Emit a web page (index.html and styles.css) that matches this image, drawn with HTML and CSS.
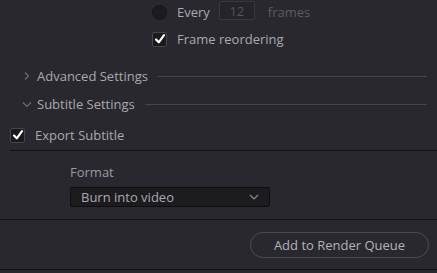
FILE: index.html
```html
<!DOCTYPE html>
<html>
<head>
<meta charset="utf-8">
<link rel="stylesheet" href="styles.css">
</head>
<body>
<div class="panel">
  <div class="opts">
    <div class="row row-every">
      <span class="radio"></span>
      <span class="label">Every</span>
      <span class="numbox">12</span>
      <span class="label dim">frames</span>
    </div>
    <div class="row row-reorder">
      <span class="check"><svg width="12" height="12" viewBox="0 0 12 12"><path d="M2 6.5 L4.8 9.3 L10 2.2" fill="none" stroke="#fff" stroke-width="2.2" stroke-linecap="round" stroke-linejoin="round"/></svg></span>
      <span class="label">Frame reordering</span>
    </div>
  </div>

  <div class="heading heading-adv">
    <svg class="chev" width="10" height="10" viewBox="0 0 10 10"><path d="M3 1.5 L6.5 5 L3 8.5" fill="none" stroke="#6c6c74" stroke-width="1.2"/></svg>
    <span class="label">Advanced Settings</span>
    <span class="rule"></span>
  </div>
  <div class="heading heading-sub">
    <svg class="chev" width="10" height="10" viewBox="0 0 10 10"><path d="M1 3.5 L5 7.5 L9 3.5" fill="none" stroke="#6c6c74" stroke-width="1.2"/></svg>
    <span class="label">Subtitle Settings</span>
    <span class="rule"></span>
  </div>

  <div class="row row-export">
    <span class="check"><svg width="12" height="12" viewBox="0 0 12 12"><path d="M2 6.5 L4.8 9.3 L10 2.2" fill="none" stroke="#fff" stroke-width="2.2" stroke-linecap="round" stroke-linejoin="round"/></svg></span>
    <span class="label">Export Subtitle</span>
  </div>
  <div class="sep sep-indent"></div>

  <div class="format">
    <div class="label">Format</div>
    <div class="select">
      <span>Burn into video</span>
      <svg width="10" height="6" viewBox="0 0 10 6"><path d="M1 1 L5 5 L9 1" fill="none" stroke="#8a8a92" stroke-width="1.2"/></svg>
    </div>
  </div>
  <div class="sep"></div>

  <div class="footer">
    <button class="btn">Add to Render Queue</button>
  </div>
  <div class="sep"></div>
</div>
</body>
</html>
```

FILE: styles.css
```css
html, body {
  margin: 0;
  padding: 0;
  background: #28282e;
}
body {
  font-family: "Open Sans", "Noto Sans", sans-serif;
  font-size: 13px;
  color: #a9a9b0;
  width: 437px;
  height: 273px;
  overflow: hidden;
}
.panel {
  display: flex;
  flex-direction: column;
}
.opts {
  display: flex;
  flex-direction: column;
  padding-left: 152px;
}
.row {
  display: flex;
  align-items: center;
  height: 24px;
}
.row-reorder {
  margin-top: 3px;
}
.radio {
  width: 15px;
  height: 15px;
  box-sizing: border-box;
  border-radius: 50%;
  background: #1c1c20;
  border: 1px solid #16161a;
  margin-right: 10px;
}
.check {
  width: 15px;
  height: 15px;
  box-sizing: border-box;
  background: #1a1a1d;
  border: 1px solid #46464c;
  border-radius: 2px;
  display: flex;
  align-items: center;
  justify-content: center;
  margin-right: 10px;
}
.numbox {
  width: 36px;
  height: 19px;
  box-sizing: border-box;
  border: 1px solid #38383e;
  border-radius: 2px;
  background: #242429;
  color: #55555c;
  display: flex;
  align-items: center;
  justify-content: center;
  margin-left: 9px;
  margin-right: 13px;
  align-self: flex-start;
  margin-top: 1px;
}
.dim {
  color: #5b5b62;
}
.heading {
  display: flex;
  align-items: center;
  height: 24px;
  padding-left: 22px;
  padding-right: 10px;
}
.heading-adv {
  margin-top: 13px;
}
.heading-sub {
  margin-top: 4px;
}
.chev {
  margin-right: 5px;
}
.rule {
  flex: 1;
  height: 1px;
  background: #45454b;
  margin-left: 10px;
}
.row-export {
  margin-top: 7px;
  padding-left: 10px;
}
.sep {
  height: 1px;
  background: #111114;
}
.sep-indent {
  margin-left: 10px;
  margin-top: 3px;
}
.format {
  display: flex;
  flex-direction: column;
  padding-left: 70px;
  padding-top: 12px;
  padding-bottom: 12px;
}
.format .label {
  color: #9a9aa1;
  height: 18px;
  line-height: 18px;
}
.select {
  margin-top: 6px;
  width: 200px;
  height: 20px;
  box-sizing: border-box;
  background: #1c1c1f;
  border: 1px solid #0e0e10;
  border-radius: 2px;
  display: flex;
  align-items: center;
  justify-content: space-between;
  padding: 0 10px 0 10px;
  color: #a9a9b0;
}
.footer {
  display: flex;
  justify-content: flex-end;
  padding: 12px 8px 11px 0;
}
.btn {
  width: 179px;
  height: 26px;
  border-radius: 13px;
  border: 1px solid #4a4a50;
  background: transparent;
  color: #b3b3ba;
  font-family: "Open Sans", "Noto Sans", sans-serif;
  font-size: 13px;
  padding: 0;
}
```
